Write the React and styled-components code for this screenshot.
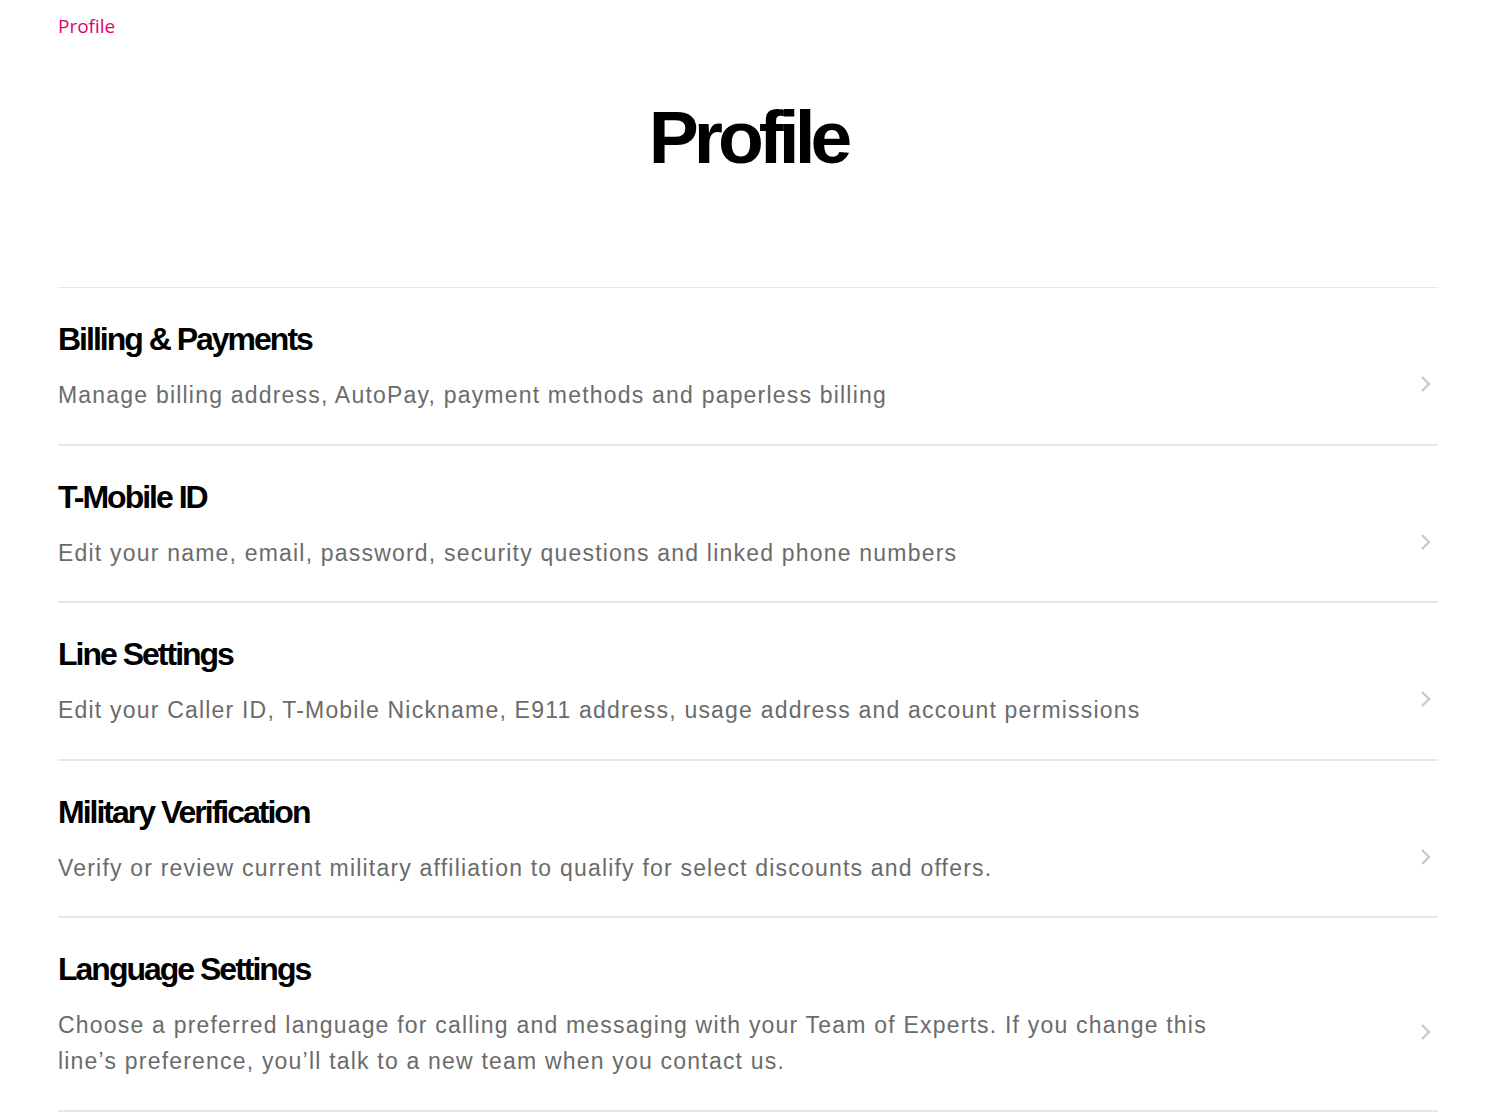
import React from "react";
import styled, { createGlobalStyle } from "styled-components";

const GlobalStyle = createGlobalStyle`
  body {
    margin: 0;
    background: #fff;
    font-family: "Liberation Sans", Arial, sans-serif;
  }
`;

const Page = styled.div`
  padding: 0 61px 0 58px;
`;

const Breadcrumb = styled.a`
  display: block;
  padding-top: 13px;
  font-family: "Open Sans", "Noto Sans", sans-serif;
  font-size: 19px;
  line-height: 26px;
  color: #e20074;
  text-decoration: none;
`;

const Title = styled.h1`
  margin: 58px 0 0;
  text-align: center;
  font-family: "Liberation Sans", Arial, sans-serif;
  font-weight: 700;
  font-size: 75px;
  line-height: 80px;
  letter-spacing: -5px;
  color: #000;
`;

const List = styled.ul`
  list-style: none;
  margin: 110px 0 0;
  padding: 0;
  border-top: 1px solid #e6e6e6;
`;

const Row = styled.li`
  padding: 32px 0 30.5px;
  border-bottom: 2px solid #e6e6e6;
  cursor: pointer;
`;

const RowTitle = styled.h2`
  margin: 0;
  font-size: 32px;
  line-height: 38px;
  font-weight: 700;
  letter-spacing: -2px;
  color: #000;
`;

const DescLine = styled.div`
  display: flex;
  align-items: center;
  justify-content: space-between;
  margin-top: 19px;
`;

const Desc = styled.p`
  margin: 0;
  max-width: 1180px;
  font-size: 23px;
  line-height: 36px;
  letter-spacing: 1.2px;
  color: #6b6b6b;
`;

const Chevron = styled.svg`
  flex: none;
  width: 12px;
  height: 18px;
  margin-right: 6px;
  transform: translateY(-11px);
`;

const items = [
  {
    title: "Billing & Payments",
    desc: "Manage billing address, AutoPay, payment methods and paperless billing",
  },
  {
    title: "T-Mobile ID",
    desc: "Edit your name, email, password, security questions and linked phone numbers",
  },
  {
    title: "Line Settings",
    desc: "Edit your Caller ID, T-Mobile Nickname, E911 address, usage address and account permissions",
  },
  {
    title: "Military Verification",
    desc: "Verify or review current military affiliation to qualify for select discounts and offers.",
  },
  {
    title: "Language Settings",
    desc: "Choose a preferred language for calling and messaging with your Team of Experts. If you change this line\u2019s preference, you\u2019ll talk to a new team when you contact us.",
  },
];

export default function App() {
  return (
    <Page>
      <GlobalStyle />
      <Breadcrumb href="#">Profile</Breadcrumb>
      <Title>Profile</Title>
      <List>
        {items.map((it) => (
          <Row key={it.title}>
            <RowTitle>{it.title}</RowTitle>
            <DescLine>
              <Desc>{it.desc}</Desc>
              <Chevron viewBox="0 0 12 18">
                <path d="M2 2l7 7-7 7" fill="none" stroke="#c8c8c8" strokeWidth="2.2" />
              </Chevron>
            </DescLine>
          </Row>
        ))}
      </List>
    </Page>
  );
}
